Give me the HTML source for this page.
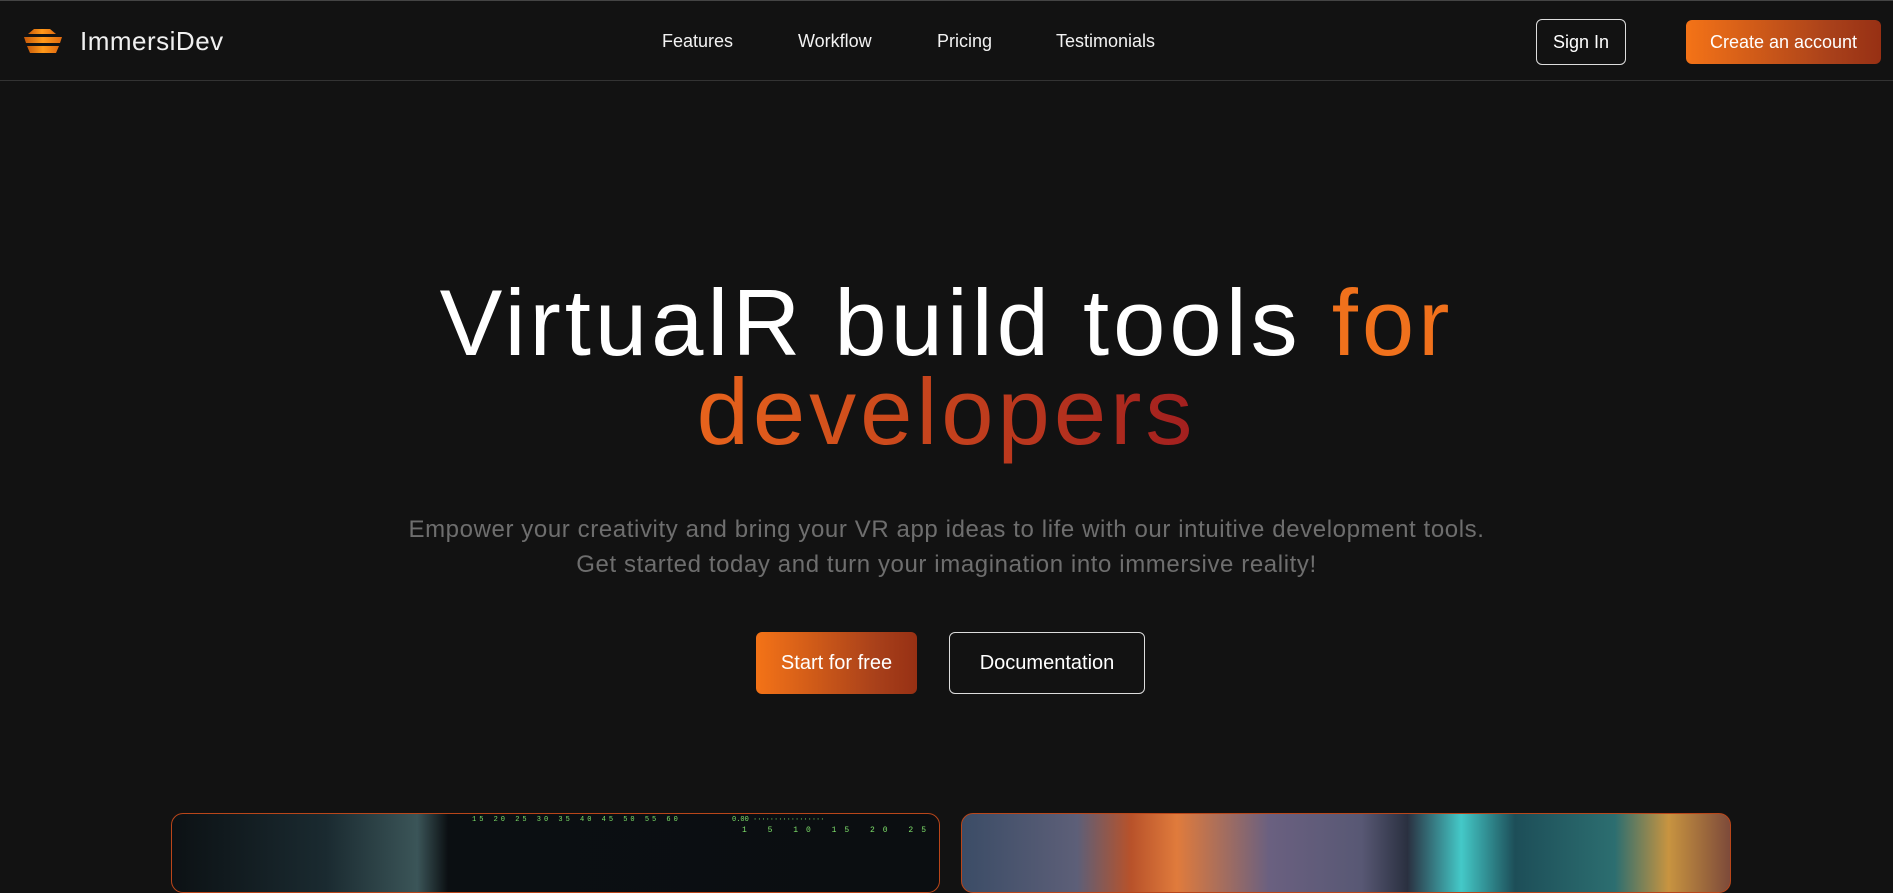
<!DOCTYPE html>
<html><head><meta charset="utf-8"><style>
*{margin:0;padding:0;box-sizing:border-box}
body{width:1893px;height:870px;background:#121212;font-family:"Liberation Sans",sans-serif;color:#fff;overflow:hidden;position:relative}
.nav{position:absolute;left:0;top:0;width:1893px;height:81px;border-bottom:1px solid #333;border-top:1px solid #444}
.a{position:absolute;white-space:nowrap}
.link{font-size:18px;top:30px;color:#f2f2f2}
.btn{position:absolute;border-radius:6px;display:flex;align-items:center;justify-content:center;font-size:18px}
.grad{background:linear-gradient(90deg,#f47317,#a8401a 75%,#973014)}
h1{position:absolute;left:0;width:1893px;text-align:center;font-weight:normal;font-size:94px;line-height:89px;top:278px;letter-spacing:4px}
.o{background:linear-gradient(90deg,#e8631c,#d14f1c 30%,#a21f1f 100%);-webkit-background-clip:text;background-clip:text;color:transparent}
p{position:absolute;left:0;width:1893px;text-align:center;color:#6e6e6e;font-size:24px;line-height:35px;top:512px;letter-spacing:.6px}
.card{position:absolute;top:813px;height:80px;border-radius:12px;border:1.5px solid #b9461a;overflow:hidden}
</style></head><body>
<div class="nav">
  <svg class="a" style="left:22px;top:26px" width="42" height="30" viewBox="0 0 42 30">
    <defs><linearGradient id="lg" x1="0" x2="1"><stop offset="0" stop-color="#c85a0a"/><stop offset=".5" stop-color="#ff9a1a"/><stop offset="1" stop-color="#e06a10"/></linearGradient></defs>
    <path d="M12 2h16l6 5H6z" fill="url(#lg)"/>
    <path d="M2 10h38l-2 6H4z" fill="url(#lg)"/>
    <path d="M5 19h32l-3 7H8z" fill="url(#lg)"/>
  </svg>
  <div class="a" style="left:80px;top:25px;font-size:26px;color:#f0f0f0;letter-spacing:.5px">ImmersiDev</div>
  <div class="a link" style="left:662px">Features</div>
  <div class="a link" style="left:798px">Workflow</div>
  <div class="a link" style="left:937px">Pricing</div>
  <div class="a link" style="left:1056px">Testimonials</div>
  <div class="btn" style="left:1536px;top:18px;width:90px;height:46px;border:1px solid #ddd">Sign In</div>
  <div class="btn grad" style="left:1686px;top:19px;width:195px;height:44px">Create an account</div>
</div>
<h1>VirtualR build tools <span style="color:#f0711c">for</span><br><span class="o">developers</span></h1>
<p>Empower your creativity and bring your VR app ideas to life with our intuitive development tools.<br>Get started today and turn your imagination into immersive reality!</p>
<div class="btn grad" style="left:756px;top:632px;width:161px;height:62px;font-size:20px">Start for free</div>
<div class="btn" style="left:949px;top:632px;width:196px;height:62px;font-size:20px;border:1px solid #ddd">Documentation</div>
<div class="card" style="left:171px;width:769px;background:linear-gradient(90deg,#0c1114 0%,#1a2a30 20%,#3b5558 32%,#0b0f12 36%,#0b0e11 100%)">
  <div class="a" style="left:300px;top:2px;font-size:7px;color:#7ee06a;font-family:'Liberation Mono',monospace;letter-spacing:3px">15 20 25 30 35 40 45 50 55 60</div>
  <div class="a" style="left:560px;top:2px;font-size:7px;color:#7ee06a;font-family:'Liberation Mono',monospace">0.00 ·················</div>
  <div class="a" style="left:570px;top:12px;font-size:8px;color:#7ee06a;font-family:'Liberation Mono',monospace;letter-spacing:8px">1 5 10 15 20 25 30 35</div>
</div>
<div class="card" style="left:961px;width:770px;background:linear-gradient(90deg,#3b4c66 0%,#5d5f78 15%,#b8522a 22%,#e07b3c 28%,#6a6080 40%,#585874 52%,#2a3040 58%,#44c9c8 65%,#1d4e58 72%,#2c6e70 85%,#c89440 92%,#7d4a3a 100%)"></div>
</body></html>
